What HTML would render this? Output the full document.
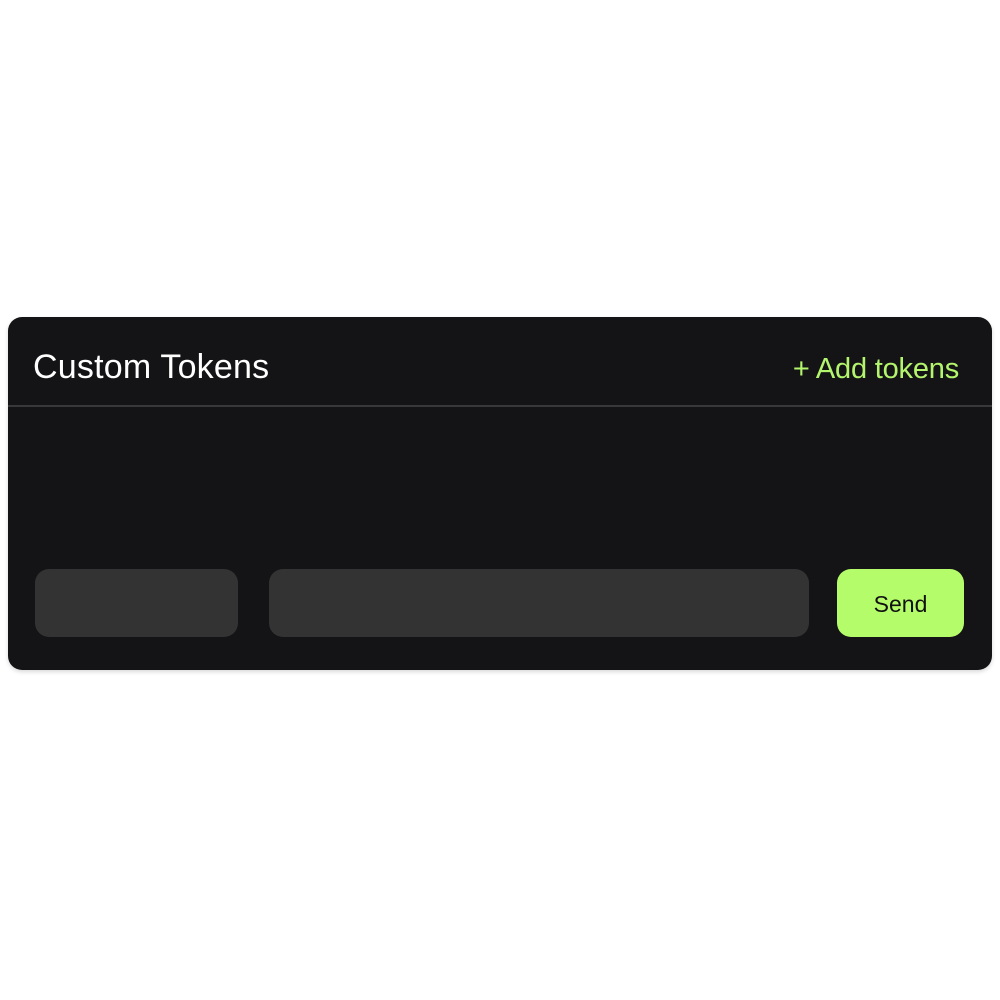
<!DOCTYPE html>
<html><head><style>
body{margin:0;width:1000px;height:1000px;background:#fff;position:relative;font-family:"Liberation Sans",sans-serif;overflow:hidden}
.card{position:absolute;left:8px;top:317px;width:984px;height:353px;background:#141416;border-radius:14px;box-shadow:0 2px 4px rgba(0,0,0,0.15)}
.t{position:absolute;left:33px;top:348px;font-size:34px;color:#fff;letter-spacing:0.2px}
.a{position:absolute;right:41px;top:353px;font-size:29px;color:#b3f56c;letter-spacing:-0.2px}
.hr{position:absolute;left:8px;top:405px;width:984px;height:2px;background:#38383a}
.in{position:absolute;top:569px;height:68px;background:#333334;border-radius:14px}
.btn{position:absolute;left:837px;top:569px;width:127px;height:68px;background:#b5fc6a;border-radius:14px;font-size:23px;color:#111;text-align:center;line-height:70px}
</style></head><body>
<div class="card"></div>
<div class="t">Custom Tokens</div>
<div class="a">+ Add tokens</div>
<div class="hr"></div>
<div class="in" style="left:35px;width:203px"></div>
<div class="in" style="left:269px;width:540px"></div>
<div class="btn">Send</div>
</body></html>
